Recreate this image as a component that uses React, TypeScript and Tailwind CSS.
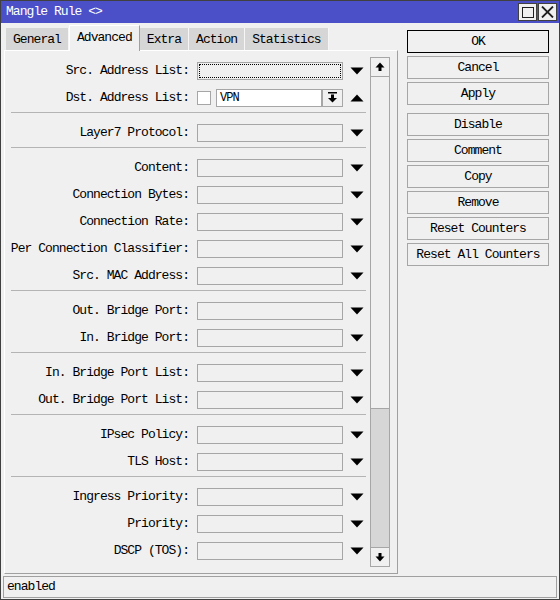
import React from 'react';

const font = { fontFamily: '"Liberation Mono", "DejaVu Sans Mono", monospace' };

type Row = { label: string; kind?: 'focus' | 'dst' };
type Group = Row[];

const groups: Group[] = [
  [{ label: 'Src. Address List:', kind: 'focus' }, { label: 'Dst. Address List:', kind: 'dst' }],
  [{ label: 'Layer7 Protocol:' }],
  [
    { label: 'Content:' },
    { label: 'Connection Bytes:' },
    { label: 'Connection Rate:' },
    { label: 'Per Connection Classifier:' },
    { label: 'Src. MAC Address:' },
  ],
  [{ label: 'Out. Bridge Port:' }, { label: 'In. Bridge Port:' }],
  [{ label: 'In. Bridge Port List:' }, { label: 'Out. Bridge Port List:' }],
  [{ label: 'IPsec Policy:' }, { label: 'TLS Host:' }],
  [{ label: 'Ingress Priority:' }, { label: 'Priority:' }, { label: 'DSCP (TOS):' }],
];

const tabs = ['General', 'Advanced', 'Extra', 'Action', 'Statistics'];

const buttons = [
  ['OK', 'Cancel', 'Apply'],
  ['Disable', 'Comment', 'Copy', 'Remove', 'Reset Counters', 'Reset All Counters'],
];

function Tri({ up }: { up?: boolean }) {
  return (
    <svg width="14" height="8" viewBox="0 0 14 8" className="block">
      {up ? <polygon points="0.5,7.5 13.5,7.5 7,0.5" fill="#000" /> : <polygon points="0.5,0.5 13.5,0.5 7,7.5" fill="#000" />}
    </svg>
  );
}

function FieldRow({ row }: { row: Row }) {
  return (
    <div className="flex items-center h-[27px]">
      <div className="w-[185px] text-right whitespace-nowrap pr-[1px]">{row.label}</div>
      {row.kind === 'dst' ? (
        <div className="ml-[7px] flex items-center w-[146px] h-[18px]">
          <div className="w-[14px] h-[14px] bg-white border border-[#a6a6a6]" />
          <div className="ml-[5px] flex-1 h-[18px] bg-white border border-[#a6a6a6] pl-[3px] leading-[16px] text-[12px]">VPN</div>
          <div className="w-[21px] h-[18px] border border-[#a6a6a6] flex items-center justify-center bg-[#f0f0f0]">
            <svg width="11" height="11" viewBox="0 0 11 11">
              <rect x="1" y="0" width="9" height="1.5" fill="#000" />
              <rect x="4" y="2.5" width="3" height="4" fill="#000" />
              <polygon points="1,6 10,6 5.5,10.5" fill="#000" />
            </svg>
          </div>
        </div>
      ) : (
        <div className="ml-[7px] w-[146px] h-[18px] border border-[#a6a6a6] bg-[#f0f0f0] p-[1px]">
          {row.kind === 'focus' && <div className="w-full h-full border border-dotted border-black" />}
        </div>
      )}
      <div className="ml-[7px]">
        <Tri up={row.kind === 'dst'} />
      </div>
    </div>
  );
}

function ScrollArrow({ up }: { up?: boolean }) {
  return (
    <div className="h-[20px] border border-[#a6a6a6] bg-[#f0f0f0] flex items-center justify-center">
      <svg width="10" height="10" viewBox="0 0 10 10">
        {up ? (
          <>
            <polygon points="0.5,5.5 9.5,5.5 5,0.5" fill="#000" />
            <rect x="3.5" y="5" width="3" height="4" fill="#000" />
          </>
        ) : (
          <>
            <rect x="3.5" y="1" width="3" height="4" fill="#000" />
            <polygon points="0.5,4.5 9.5,4.5 5,9.5" fill="#000" />
          </>
        )}
      </svg>
    </div>
  );
}

export default function App() {
  return (
    <div
      className="w-[560px] h-[600px] bg-[#f0f0f0] border border-[#404040] flex flex-col text-[13px] tracking-[-0.95px] text-black overflow-hidden"
      style={font}
    >
      {/* title bar */}
      <div className="h-[22px] bg-[#4b50c9] flex items-center justify-between pl-[5px] pr-[2px]">
        <span className="text-white">Mangle Rule &lt;&gt;</span>
        <div className="flex gap-[1px]">
          <div className="w-[19px] h-[18px] bg-[#f0f0f0] border border-[#404040] flex items-center justify-center">
            <div className="w-[12px] h-[11px] border-[1.5px] border-[#202020]" />
          </div>
          <div className="w-[19px] h-[18px] bg-[#f0f0f0] border border-[#404040] flex items-center justify-center">
            <svg width="13" height="12" viewBox="0 0 13 12">
              <path d="M1 0.5 L12 11.5 M12 0.5 L1 11.5" stroke="#202020" strokeWidth="1.8" />
            </svg>
          </div>
        </div>
      </div>

      <div className="flex flex-1">
        {/* left side */}
        <div className="w-[394px] ml-[3px] flex flex-col">
          <div className="flex h-[27px] items-end pl-[2px]">
            {tabs.map(t =>
              t === 'Advanced' ? (
                <div
                  key={t}
                  className="h-[26px] px-[7px] bg-[#f0f0f0] border-t border-l border-white border-r border-r-[#a0a0a0] leading-[24px] relative top-[1px] z-10"
                >
                  {t}
                </div>
              ) : (
                <div key={t} className="h-[22px] px-[7px] bg-[#d6d6d6] border-r border-[#f6f6f6] leading-[23px]">
                  {t}
                </div>
              ),
            )}
          </div>
          <div className="h-[524px] border border-[#a0a0a0] border-t-white border-l-white flex pt-[6px]">
            <div className="w-[365px]">
              {groups.map((g, gi) => (
                <div key={gi}>
                  {gi > 0 && (
                    <div className="h-[8px] pt-[1px] pl-[6px] pr-[4px]">
                      <div className="h-px bg-[#b4b4b4]" />
                    </div>
                  )}
                  {g.map(r => (
                    <FieldRow key={r.label} row={r} />
                  ))}
                </div>
              ))}
            </div>
            <div className="w-[20px] h-[510px] flex flex-col">
              <ScrollArrow up />
              <div className="h-[332px] border border-[#a6a6a6] border-t-0 bg-[#f0f0f0]" />
              <div className="flex-1 bg-[#d6d6d6] border-x border-[#a6a6a6]" />
              <ScrollArrow />
            </div>
          </div>
        </div>

        {/* right buttons */}
        <div className="ml-[9px] mt-[7px] w-[142px] flex flex-col">
          {buttons.map((grp, gi) => (
            <div key={gi} className={`flex flex-col gap-[3px] ${gi > 0 ? 'mt-[8px]' : ''}`}>
              {grp.map(b => (
                <div
                  key={b}
                  className={`h-[23px] flex items-center justify-center bg-[#f0f0f0] border ${
                    b === 'OK' ? 'border-black' : 'border-[#a6a6a6]'
                  }`}
                >
                  {b}
                </div>
              ))}
            </div>
          ))}
        </div>
      </div>

      {/* status bar */}
      <div className="h-[22px] mx-[2px] mb-[1px] mt-[2px] border border-[#a0a0a0] flex items-center pl-[3px]">
        enabled
      </div>
    </div>
  );
}
